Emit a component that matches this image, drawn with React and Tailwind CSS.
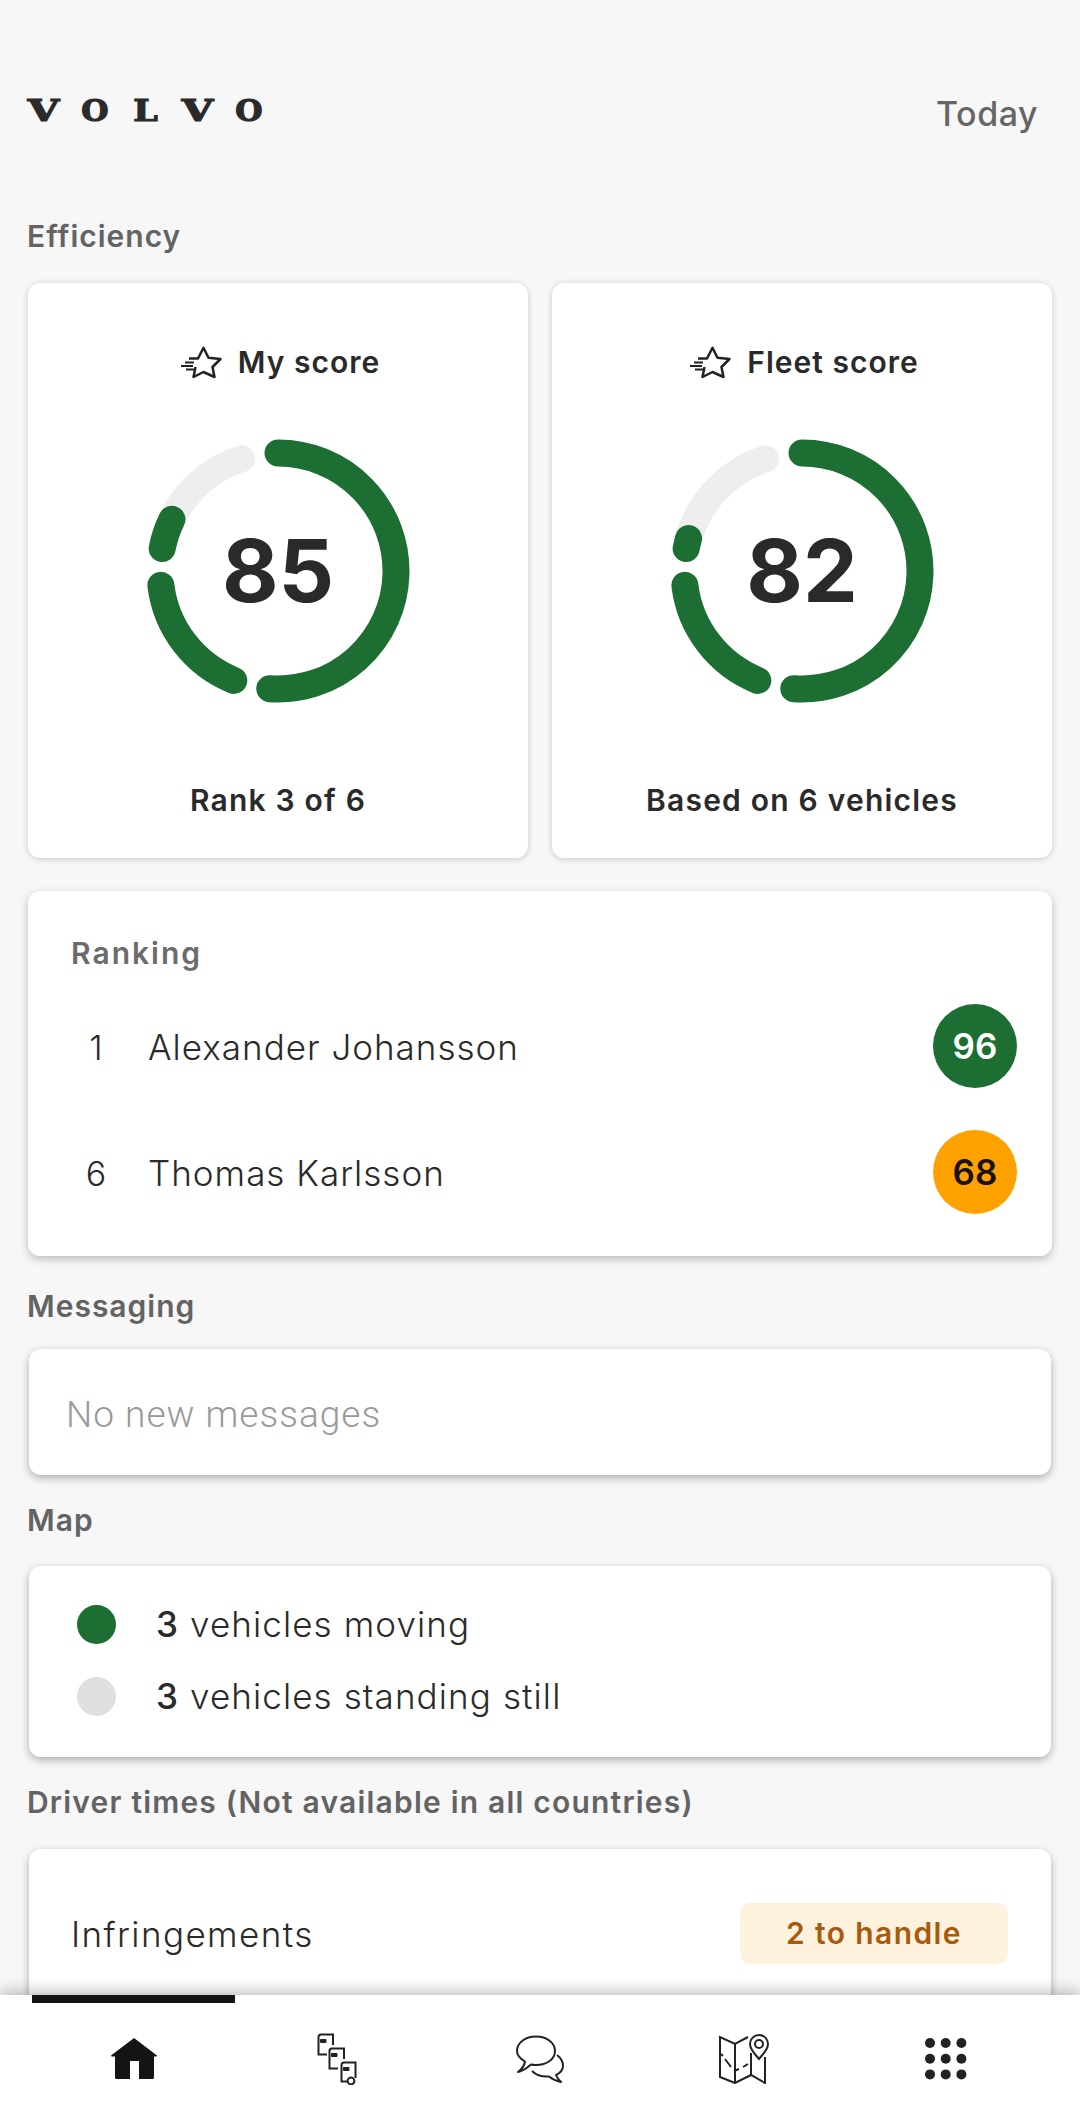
import React from 'react';

const GREEN = '#1c6e32';

// angle in degrees, clockwise from twelve o'clock
function arc(start, end, r = 118, c = 135) {
  const pt = (a) => {
    const rad = (a * Math.PI) / 180;
    return [c + r * Math.sin(rad), c - r * Math.cos(rad)];
  };
  const [x1, y1] = pt(start);
  const [x2, y2] = pt(end);
  const large = end - start > 180 ? 1 : 0;
  return `M${x1} ${y1} A${r} ${r} 0 ${large} 1 ${x2} ${y2}`;
}

function Ring({ value, thirdEnd }) {
  return (
    <div className="relative h-[270px] w-[270px]">
      <svg width="270" height="270" viewBox="0 0 270 270" fill="none" strokeWidth="27" strokeLinecap="round">
        <path d={arc(281, 342)} stroke="#eeeeee" />
        <path d={arc(0, 184)} stroke={GREEN} />
        <path d={arc(202, 263)} stroke={GREEN} />
        <path d={arc(281, thirdEnd)} stroke={GREEN} />
      </svg>
      <div className="absolute inset-0 flex items-center justify-center text-[87px] font-bold text-[#2a2a2a]">{value}</div>
    </div>
  );
}

function StarIcon() {
  return (
    <svg width="41" height="33" viewBox="0 0 41 33" fill="none" stroke="#222222" strokeWidth="2.5" strokeLinejoin="round">
      <path d="M8 12.5H17L22.5 1.8L27.5 11.8L39.5 13L31.5 21L33.5 31L22.5 26L12.5 31L14.5 21" />
      <path d="M4 16.5H13M0 20H12M5 23.5H13" strokeWidth="2" />
    </svg>
  );
}

function ScoreCard({ title, value, thirdEnd, foot }) {
  return (
    <div className="flex h-[575px] flex-1 flex-col items-center rounded-[12px] bg-white pt-[61px] shadow-[0_1px_6px_rgba(0,0,0,0.2)]">
      <div className="flex h-[36px] items-center gap-[16px] pl-[5px]">
        <StarIcon />
        <span className="text-[30px] font-semibold tracking-[1px] text-[#2a2a2a]">{title}</span>
      </div>
      <div className="mt-[56px]">
        <Ring value={value} thirdEnd={thirdEnd} />
      </div>
      <div className="mt-[74px] text-[30px] leading-[40px] font-semibold tracking-[1.2px] text-[#2a2a2a]">{foot}</div>
    </div>
  );
}

function Label({ children, className }) {
  return (
    <div className={`flex items-center bg-[#f7f7f7] pl-[27px] text-[30px] font-semibold tracking-[1px] text-[#636363] ${className}`}>
      {children}
    </div>
  );
}

function RankRow({ rank, name, score, badge }) {
  return (
    <div className="flex h-[84px] items-center">
      <span className="w-[60px] pt-[3px] text-center text-[34px] font-light text-[#2a2a2a]">{rank}</span>
      <span className="ml-[22px] pt-[3px] text-[35px] font-light tracking-[1px] text-[#2a2a2a]">{name}</span>
      <span className={`ml-auto flex h-[84px] w-[84px] items-center justify-center rounded-full text-[35px] font-semibold ${badge}`}>{score}</span>
    </div>
  );
}

function MapRow({ dot, text }) {
  return (
    <div className="flex items-center gap-[40px]">
      <span className={`h-[39px] w-[39px] rounded-full ${dot}`} />
      <span className="text-[35px] leading-[39px] font-light tracking-[1.1px] text-[#2a2a2a]">
        <span className="font-medium">3</span> {text}
      </span>
    </div>
  );
}

function Logo() {
  return (
    <div className="flex h-[22px] items-center font-['DejaVu_Serif',serif] text-[29px] font-bold text-[#2a2a2a] [-webkit-text-stroke:1.2px_#2a2a2a]">
      <span className="w-[33px] scale-x-[1.4] text-center">V</span>
      <span className="ml-[22px] w-[26px] scale-x-[1.08] text-center">O</span>
      <span className="ml-[25px] w-[25px] scale-x-[1.2] text-center">L</span>
      <span className="ml-[23px] w-[33px] scale-x-[1.4] text-center">V</span>
      <span className="ml-[22px] w-[26px] scale-x-[1.08] text-center">O</span>
    </div>
  );
}

function HomeIcon() {
  return (
    <svg width="48" height="44" viewBox="0 0 48 44" fill="#141414">
      <path d="M24 1L47 18.5L46.5 19.5H44V40.5Q44 42 42.5 42H29V24H20V42H6.5Q5 42 5 40.5V19.5H1.5L1 18.5Z" />
    </svg>
  );
}

function TrucksIcon() {
  const truck = 'M16 12V1.5H4Q1.5 1.5 1.5 4V21.5H10';
  return (
    <svg width="40" height="52" viewBox="0 0 40 52" fill="none" stroke="#222222" strokeWidth="2">
      <path d={truck} />
      <path d="M3.5 6.5H9V9.5H3.5Z" fill="#222222" strokeWidth="1" />
      <g transform="translate(11 14)">
        <path d={truck} />
        <path d="M3.5 6.5H9V9.5H3.5Z" fill="#222222" strokeWidth="1" />
      </g>
      <g transform="translate(23 28)">
        <path d="M15.5 17V1.5H4Q1.5 1.5 1.5 4V20.5H7" />
        <path d="M3.5 6.5H9V9.5H3.5Z" fill="#222222" strokeWidth="1" />
        <circle cx="11" cy="20" r="3.4" />
      </g>
    </svg>
  );
}

function ChatIcon() {
  return (
    <svg width="48" height="50" viewBox="0 0 48 50" fill="none" stroke="#222222" strokeWidth="2" strokeLinejoin="round">
      <path d="M9 27.5C3 24 1 21 1 17C1 9 9 2.5 20 2.5C31 2.5 39 9 39 17C39 25 31 31 20 31C18.5 31 17 31 15 30.5C11 34 7 37 2 38C6 35 8.5 31 9 27.5Z" />
      <path d="M41 21C45 24 47 28 47 32C47 36 44 39 40 41C41 44 43 46 45 48C40 47 36 45 33 42.5C26 43 20 41 16 37" />
    </svg>
  );
}

function MapIcon() {
  return (
    <svg width="51" height="50" viewBox="0 0 51 50" fill="none" stroke="#222222" strokeWidth="2">
      <path d="M30 3L17 10L2 3V43L17 49L33 41L47 49V23" />
      <path d="M17 10V49M33 19V41" />
      <path d="M3 20L5 22M7 25L13 33M16 37L21 35M25 33L30 30" />
      <path d="M41 25C38 21 32 16 32 10A9 9 0 0 1 50 10C50 16 44 21 41 25Z" />
      <circle cx="41" cy="10" r="4" />
    </svg>
  );
}

function GridIcon() {
  const spots = [5, 20.7, 36.4];
  return (
    <svg width="42" height="42" viewBox="0 0 42 42" fill="#222222">
      {spots.map((y) => spots.map((x) => <circle key={`${x}-${y}`} cx={x} cy={y} r="5" />))}
    </svg>
  );
}

const NAV_ICONS = [HomeIcon, TrucksIcon, ChatIcon, MapIcon, GridIcon];

export default function App() {
  return (
    <div className="flex h-[2124px] w-[1080px] flex-col overflow-hidden bg-[#f7f7f7] font-['Inter',sans-serif]">
      <div className="min-h-0 flex-1 overflow-hidden">
        {/* Header */}
        <div className="flex items-center justify-between pt-[101px] pr-[42px] pl-[27px]">
          <Logo />
          <span className="translate-y-[2px] text-[34px] leading-[22px] font-medium tracking-[0.5px] text-[#666666]">Today</span>
        </div>

        {/* Efficiency */}
        <Label className="mt-[62px] h-[98px] pt-[5px]">Efficiency</Label>
        <div className="flex gap-[24px] px-[28px]">
          <ScoreCard title="My score" value="85" thirdEnd={296} foot="Rank 3 of 6" />
          <ScoreCard title="Fleet score" value="82" thirdEnd={286} foot="Based on 6 vehicles" />
        </div>

        {/* Ranking */}
        <div className="mx-[28px] mt-[33px] h-[365px] rounded-[12px] bg-white pt-[42px] pr-[35px] pl-[43px] shadow-[0_3px_8px_rgba(0,0,0,0.25)]">
          <div className="text-[30px] leading-[40px] font-semibold tracking-[2px] text-[#6b6b6b]">Ranking</div>
          <div className="mt-[31px] -ml-[5px] flex flex-col gap-[42px]">
            <RankRow rank="1" name="Alexander Johansson" score="96" badge="bg-[#1c6e32] text-white" />
            <RankRow rank="6" name="Thomas Karlsson" score="68" badge="bg-[#ffa200] text-[#1a1208]" />
          </div>
        </div>

        {/* Messaging */}
        <Label className="mt-[13px] h-[80px] pb-[6px]">Messaging</Label>
        <div className="mx-[29px] flex h-[126px] items-center rounded-[12px] bg-white pt-[5px] pl-[37px] font-['Roboto',sans-serif] text-[37px] font-light tracking-[1px] text-[#999999] shadow-[0_3px_8px_rgba(0,0,0,0.3)]">
          No new messages
        </div>

        {/* Map */}
        <Label className="mt-[13px] h-[78px] pb-[14px]">Map</Label>
        <div className="mx-[29px] flex h-[191px] flex-col gap-[33px] rounded-[12px] bg-white pt-[39px] pl-[48px] shadow-[0_3px_8px_rgba(0,0,0,0.3)]">
          <MapRow dot="bg-[#1c6e32]" text="vehicles moving" />
          <MapRow dot="bg-[#dfdfdf]" text="vehicles standing still" />
        </div>

        {/* Driver times */}
        <Label className="mt-[12px] h-[80px] pb-[14px]">
          <span className="tracking-[1.2px]">Driver times (Not available in all countries)</span>
        </Label>
        <div className="mx-[29px] flex h-[200px] items-start justify-between rounded-[12px] bg-white pt-[54px] pr-[43px] pl-[42px] shadow-[0_3px_8px_rgba(0,0,0,0.3)]">
          <span className="text-[35px] leading-[63px] font-light tracking-[1.4px] text-[#2a2a2a]">Infringements</span>
          <span className="flex h-[61px] w-[268px] items-center justify-center rounded-[10px] bg-[#fef2df] text-[30px] font-semibold tracking-[1.4px] text-[#a85a0c]">2 to handle</span>
        </div>
      </div>

      {/* Bottom nav */}
      <div className="relative z-10 grid h-[129px] shrink-0 grid-cols-5 bg-white px-[32px] shadow-[0_-4px_14px_rgba(0,0,0,0.25)]">
        {NAV_ICONS.map((Icon, i) => (
          <div key={i} className="flex flex-col items-center">
            <div className={`h-[8px] w-full ${i === 0 ? 'bg-[#141414]' : ''}`} />
            <div className="flex h-[112px] items-center justify-center">
              <Icon />
            </div>
          </div>
        ))}
      </div>
    </div>
  );
}
